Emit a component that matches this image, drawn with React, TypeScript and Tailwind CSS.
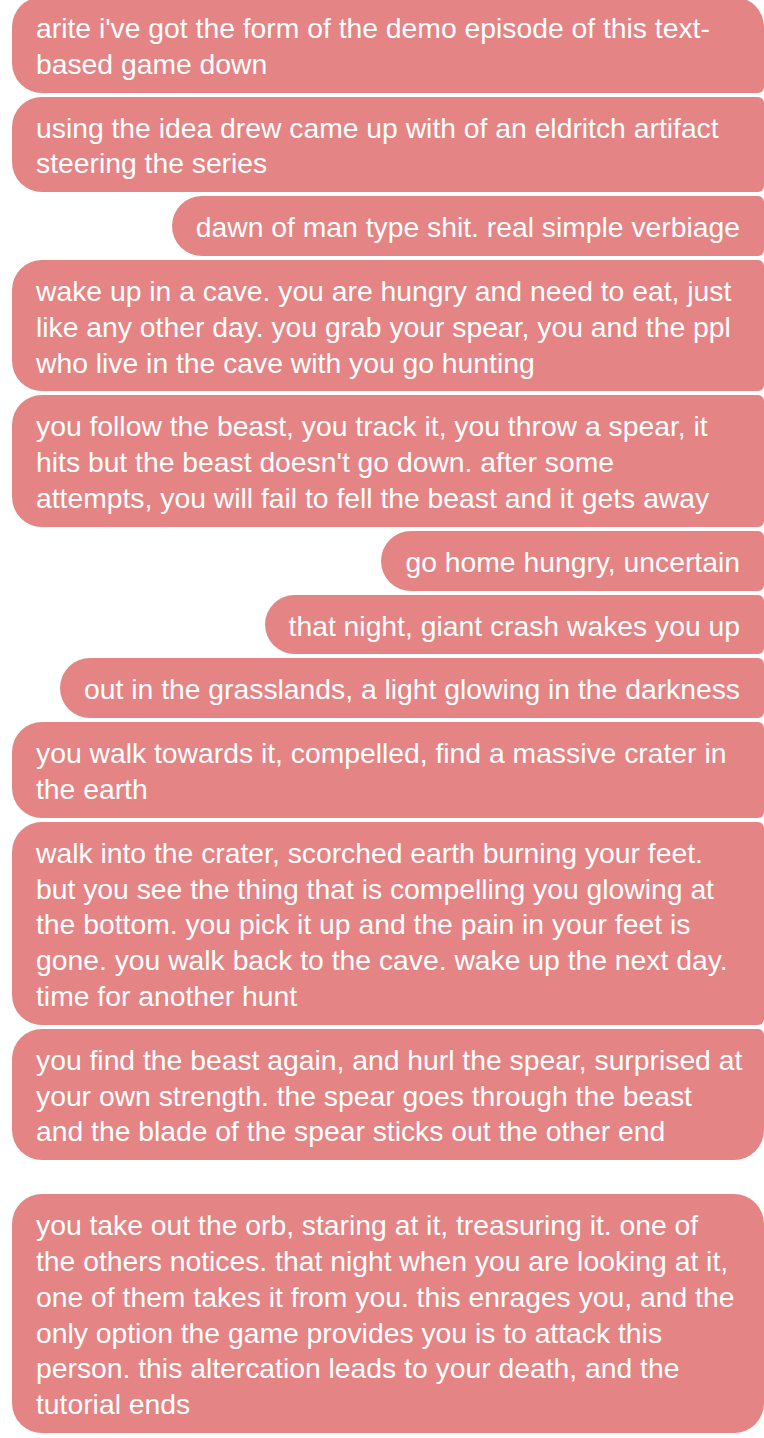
import React from "react";

type Msg = { lines: string[]; corners: string; extra?: string };

// wrapped the same way as the screenshot
const messages: Msg[] = [
  { lines: ["arite i've got the form of the demo episode of this text-", "based game down"], corners: "rounded-tr-[30px] rounded-br-md" },
  { lines: ["using the idea drew came up with of an eldritch artifact", "steering the series"], corners: "rounded-r-md" },
  { lines: ["dawn of man type shit. real simple verbiage"], corners: "rounded-r-md" },
  { lines: ["wake up in a cave. you are hungry and need to eat, just", "like any other day. you grab your spear, you and the ppl", "who live in the cave with you go hunting"], corners: "rounded-r-md" },
  { lines: ["you follow the beast, you track it, you throw a spear, it", "hits but the beast doesn't go down. after some", "attempts, you will fail to fell the beast and it gets away"], corners: "rounded-r-md" },
  { lines: ["go home hungry, uncertain"], corners: "rounded-r-md" },
  { lines: ["that night, giant crash wakes you up"], corners: "rounded-r-md" },
  { lines: ["out in the grasslands, a light glowing in the darkness"], corners: "rounded-r-md" },
  { lines: ["you walk towards it, compelled, find a massive crater in", "the earth"], corners: "rounded-r-md" },
  { lines: ["walk into the crater, scorched earth burning your feet.", "but you see the thing that is compelling you glowing at", "the bottom. you pick it up and the pain in your feet is", "gone. you walk back to the cave. wake up the next day.", "time for another hunt"], corners: "rounded-r-md" },
  { lines: ["you find the beast again, and hurl the spear, surprised at", "your own strength. the spear goes through the beast", "and the blade of the spear sticks out the other end"], corners: "rounded-tr-md rounded-br-[30px]" },
  { lines: ["you take out the orb, staring at it, treasuring it. one of", "the others notices. that night when you are looking at it,", "one of them takes it from you. this enrages you, and the", "only option the game provides you is to attack this", "person. this altercation leads to your death, and the", "tutorial ends"], corners: "rounded-r-[30px]", extra: "mt-[30px]" },
];

export default function App() {
  return (
    <div className="min-h-[1438px] w-full bg-white overflow-hidden">
      <div className="-mt-[3px] flex flex-col items-end gap-1 pl-3">
        {messages.map((m, i) => (
          <div
            key={i}
            className={`${m.lines.length > 1 ? "w-full" : ""} max-w-[752px] bg-[#e48484] px-6 pt-[14px] pb-[10px] text-[28.3px] leading-[35.8px] text-white rounded-l-[30px] ${m.corners} ${m.extra ?? ""}`}
            style={{ fontFamily: '"Liberation Sans", Arial, Helvetica, sans-serif' }}
          >
            {m.lines.map((l, j) => (
              <div key={j} className="whitespace-nowrap">{l}</div>
            ))}
          </div>
        ))}
      </div>
    </div>
  );
}
